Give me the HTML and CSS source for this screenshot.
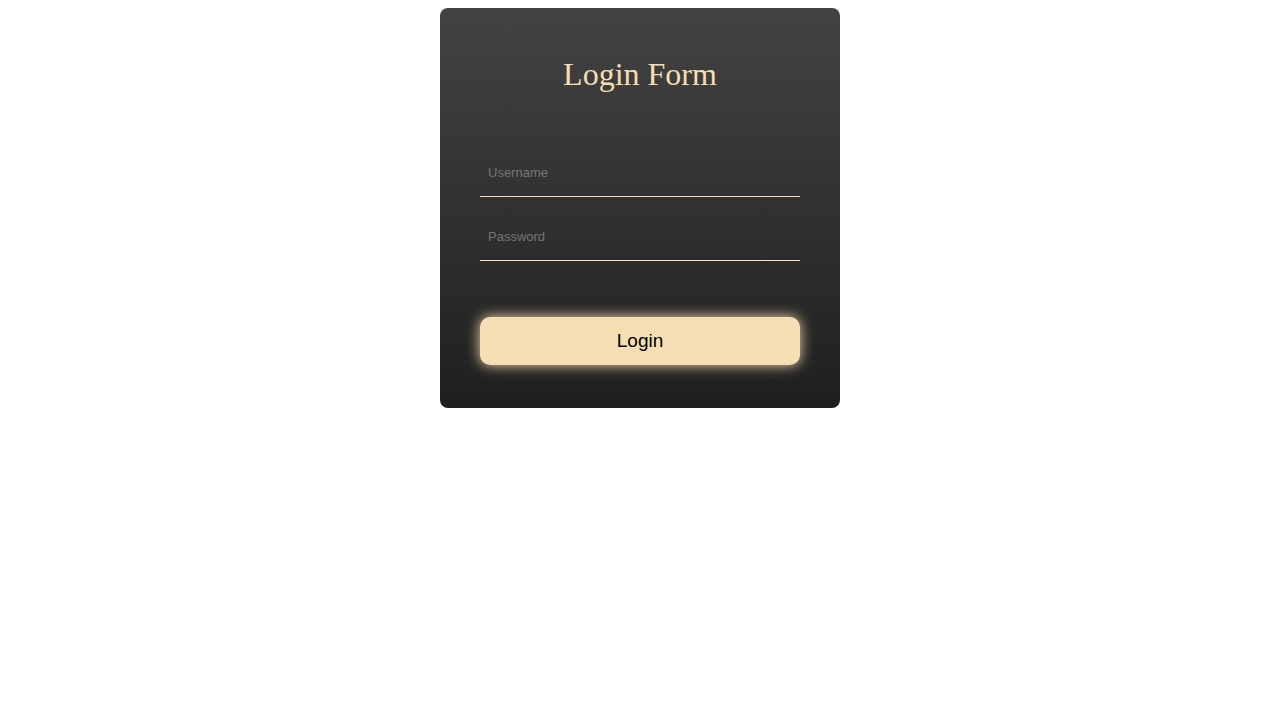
FILE: index.html
```
<!DOCTYPE html>
<html lang="en">
<head>
    <meta charset="UTF-8">
    <meta name="viewport" content="width=device-width, initial-scale=1.0">
    <title>Login Form</title>
    <link rel="stylesheet" href="styles.css">
</head>
<body>
    <div class="login-card">
        <h1>Login Form</h1>
        <form class="login-form">
            <input type="text" placeholder="Username">
            <input type="password" placeholder="Password">
            <button type="button">Login</button>
        </form>
    </div>
</body>
</html>
```

FILE: styles.css
```
:root {
    --accent-color: #f5deb3;
    --card-top: #434343;
    --card-bottom: #1f1f1f;
}

* {
    box-sizing: border-box;
}

body {
    margin: 8px;
    background-color: #ffffff;
    font-family: 'Liberation Sans', Arial, sans-serif;
}

.login-card {
    width: 400px;
    height: 400px;
    margin: 0 auto;
    padding: 40px;
    border-radius: 8px;
    background: linear-gradient(to bottom, var(--card-top), var(--card-bottom));
}

h1 {
    margin: 8px 0 0;
    color: var(--accent-color);
    font-family: 'Liberation Serif', 'Times New Roman', serif;
    font-size: 32px;
    font-weight: normal;
    line-height: 37px;
    text-align: center;
}

.login-form {
    display: flex;
    flex-direction: column;
    margin-top: 58px;
}

.login-form input {
    display: block;
    width: 100%;
    padding: 14px 8px 16px;
    border: none;
    border-bottom: 1px solid var(--accent-color);
    background: transparent;
    color: #dddddd;
    font-family: inherit;
    font-size: 13px;
    line-height: 15px;
    outline: none;
}

.login-form input + input {
    margin-top: 18px;
}

.login-form input::placeholder {
    color: #757575;
}

.login-form button {
    height: 48px;
    margin-top: 56px;
    border: none;
    border-radius: 10px;
    background-color: var(--accent-color);
    box-shadow: 0 0 14px var(--accent-color);
    color: #000000;
    font-family: inherit;
    font-size: 19px;
    cursor: pointer;
}
```
